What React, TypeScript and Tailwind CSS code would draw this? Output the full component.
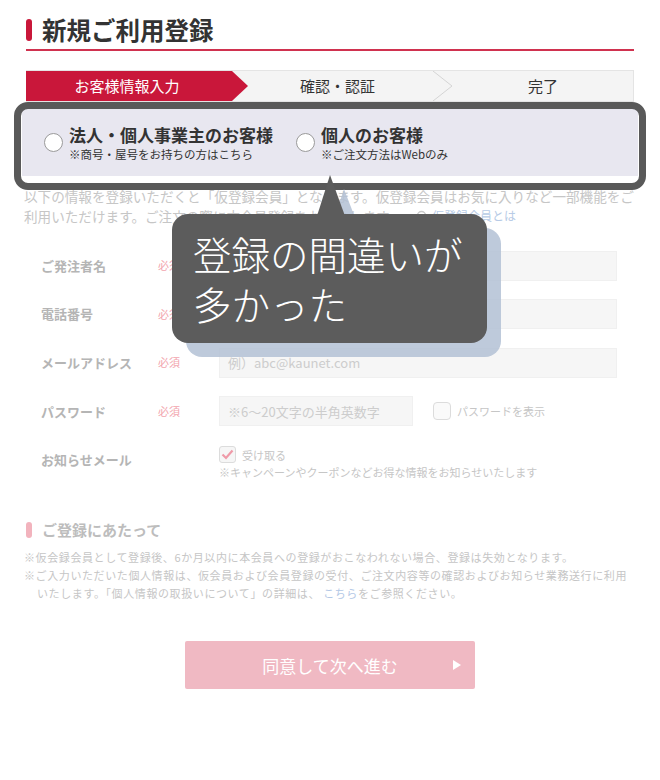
import React from "react";
import { Search } from "lucide-react";

export default function App() {
  const rows = [
    { label: "ご発注者名", placeholder: "" },
    { label: "電話番号", placeholder: "" },
    { label: "メールアドレス", placeholder: "例）abc@kaunet.com" },
  ];

  return (
    <div className="relative w-[660px] h-[780px] overflow-hidden bg-white font-['Noto_Sans_CJK_JP','Noto_Sans',sans-serif] text-[#333]">
      {/* Title */}
      <div className="mx-[26px] pt-[16px]">
        <div className="flex items-center gap-[10px] border-b-2 border-[#d0324f] pb-[5px]">
          <span className="h-[22px] w-[6px] rounded-[3px] bg-[#c9173a]" />
          <h1 className="text-[24.5px] font-bold leading-[28px] text-[#333]">新規ご利用登録</h1>
        </div>

        {/* Steps */}
        <div className="mt-[19px] flex h-[32px] border border-l-0 border-[#e4e4e4] bg-[#f4f4f4] text-[15px] leading-[30px]">
          <div className="w-[222px] bg-[#c9173a] pr-[20px] text-center text-white [clip-path:polygon(0_0,calc(100%-16px)_0,100%_50%,calc(100%-16px)_100%,0_100%)]">
            お客様情報入力
          </div>
          <div className="w-[185px] pr-[6px] text-center text-[#333]">確認・認証</div>
          <svg width="20" height="30" viewBox="0 0 20 30" className="shrink-0">
            <polyline points="0,0 19,15 0,30" fill="none" stroke="#d4d4d4" strokeWidth="1" />
          </svg>
          <div className="flex-1 text-center text-[#333]">完了</div>
        </div>
      </div>

      {/* Customer type panel with highlight frame */}
      <div className="relative mx-[22px] mt-[7px] flex h-[67px] items-center bg-[#e8e7f0]">
        <div className="pointer-events-none absolute -left-[8px] -right-[8px] -top-[7px] -bottom-[14px] z-10 rounded-[14px] border-[7px] border-[#595959]" />
        <label className="flex w-[274px] items-center gap-[6px] pl-[22px]">
          <span className="h-[19px] w-[19px] shrink-0 rounded-full border-[1.5px] border-[#9a9a9a] bg-white" />
          <span className="flex flex-col">
            <span className="text-[17px] font-bold leading-[22px]">法人・個人事業主のお客様</span>
            <span className="text-[11.5px] leading-[16px]">※商号・屋号をお持ちの方はこちら</span>
          </span>
        </label>
        <label className="flex items-center gap-[6px]">
          <span className="h-[19px] w-[19px] shrink-0 rounded-full border-[1.5px] border-[#9a9a9a] bg-white" />
          <span className="flex flex-col">
            <span className="text-[17px] font-bold leading-[22px]">個人のお客様</span>
            <span className="text-[11.5px] leading-[16px]">※ご注文方法はWebのみ</span>
          </span>
        </label>
      </div>

      {/* Faded form below */}
      <p className="mt-[11px] whitespace-nowrap px-[24px] text-[13.6px] leading-[19px] text-[#c6c6c6]">
        以下の情報を登録いただくと「仮登録会員」となります。仮登録会員はお気に入りなど一部機能をご
        <br />
        利用いただけます。ご注文の際に本会員登録をお願いします。
        <span className="ml-[14px] inline-flex items-center gap-[4px] text-[12px] text-[#b7cbe6]">
          <Search className="h-[12px] w-[12px] text-[#c9c9c9]" strokeWidth={3} />
          仮登録会員とは
        </span>
      </p>

      <div className="mt-[25px] flex flex-col gap-[18.6px] pl-[41px] pr-[43px]">
        {rows.map((r) => (
          <div key={r.label} className="flex h-[30px] items-center">
            <span className="w-[117px] text-[13px] font-bold text-[#b5b5b5]">{r.label}</span>
            <span className="w-[61px] text-[11px] text-[#f2a5ae]">必須</span>
            <div className="flex h-full flex-1 items-center border border-[#f0f0f0] bg-[#f6f6f6] px-[8px] text-[13px] text-[#cdcdcd]">
              {r.placeholder}
            </div>
          </div>
        ))}
        <div className="flex h-[30px] items-center">
          <span className="w-[117px] text-[13px] font-bold text-[#b5b5b5]">パスワード</span>
          <span className="w-[61px] text-[11px] text-[#f2a5ae]">必須</span>
          <div className="flex h-full w-[194px] items-center border border-[#f0f0f0] bg-[#f6f6f6] px-[8px] text-[13px] text-[#cdcdcd]">
            ※6～20文字の半角英数字
          </div>
          <span className="ml-[20px] h-[18px] w-[18px] rounded-[4px] border border-[#dcdcdc] bg-[#fafafa]" />
          <span className="ml-[6px] text-[11px] text-[#c6c6c6]">パスワードを表示</span>
        </div>
      </div>

      <div className="mt-[20px] flex items-start pl-[41px]">
        <span className="mt-[4px] w-[178px] text-[13px] font-bold text-[#b5b5b5]">お知らせメール</span>
        <div className="flex flex-col">
          <div className="flex items-center gap-[6px]">
            <span className="flex h-[17px] w-[17px] items-center justify-center rounded-[3px] border border-[#dcdcdc] bg-[#f6f6f6]">
              <svg width="13" height="11" viewBox="0 0 13 11">
                <polyline points="1.5,5.5 5,9 11.5,1.5" fill="none" stroke="#ef9aa8" strokeWidth="2.2" />
              </svg>
            </span>
            <span className="text-[11px] text-[#c6c6c6]">受け取る</span>
          </div>
          <span className="mt-[1px] text-[11px] leading-[16px] text-[#c6c6c6]">
            ※キャンペーンやクーポンなどお得な情報をお知らせいたします
          </span>
        </div>
      </div>

      {/* Notes */}
      <div className="mt-[40px] flex items-center gap-[10px] pl-[26px]">
        <span className="h-[16px] w-[6px] rounded-[3px] bg-[#f2b3bd]" />
        <h2 className="text-[15px] font-bold leading-[20px] text-[#bdbdbd]">ご登録にあたって</h2>
      </div>
      <div className="mt-[8px] px-[24px] text-[11px] leading-[18px] tracking-[0.6px] text-[#c6c6c6]">
        <p className="whitespace-nowrap">※仮会録会員として登録後、6か月以内に本会員への登録がおこなわれない場合、登録は失効となります。</p>
        <p className="whitespace-nowrap">※ご入力いただいた個人情報は、仮会員および会員登録の受付、ご注文内容等の確認およびお知らせ業務送行に利用</p>
        <p className="whitespace-nowrap pl-[13px]">
          いたします。「個人情報の取扱いについて」の詳細は、 <span className="text-[#b3c8e6]">こちら</span>をご参照ください。
        </p>
      </div>

      <div className="mt-[39px] flex justify-center">
        <button className="relative flex h-[48px] w-[290px] items-center justify-center rounded-[2px] bg-[#f0b9c3] text-[17px] text-white">
          同意して次へ進む
          <svg width="8" height="10" viewBox="0 0 8 10" className="absolute right-[14px]">
            <polygon points="0,0 8,5 0,10" fill="#fff" />
          </svg>
        </button>
      </div>

      {/* Callout */}
      <div className="absolute left-[186px] top-[228px] z-20 h-[129px] w-[315px] rounded-[16px] bg-[#b3c1d5]/85" />
      <svg width="60" height="60" viewBox="0 0 60 60" className="absolute left-[310px] top-[170px] z-20">
        <polygon points="34,19 21,58 49,58" fill="#b3c1d5" fillOpacity="0.85" />
        <polygon points="20,5 7,46 35,46" fill="#5c5c5c" />
      </svg>
      <div className="absolute left-[172px] top-[214px] z-20 h-[129px] w-[315px] rounded-[16px] bg-[#5c5c5c] px-[21px] pt-[14px] text-[38.5px] font-light leading-[50px] text-white">
        登録の間違いが
        <br />
        多かった
      </div>
    </div>
  );
}
